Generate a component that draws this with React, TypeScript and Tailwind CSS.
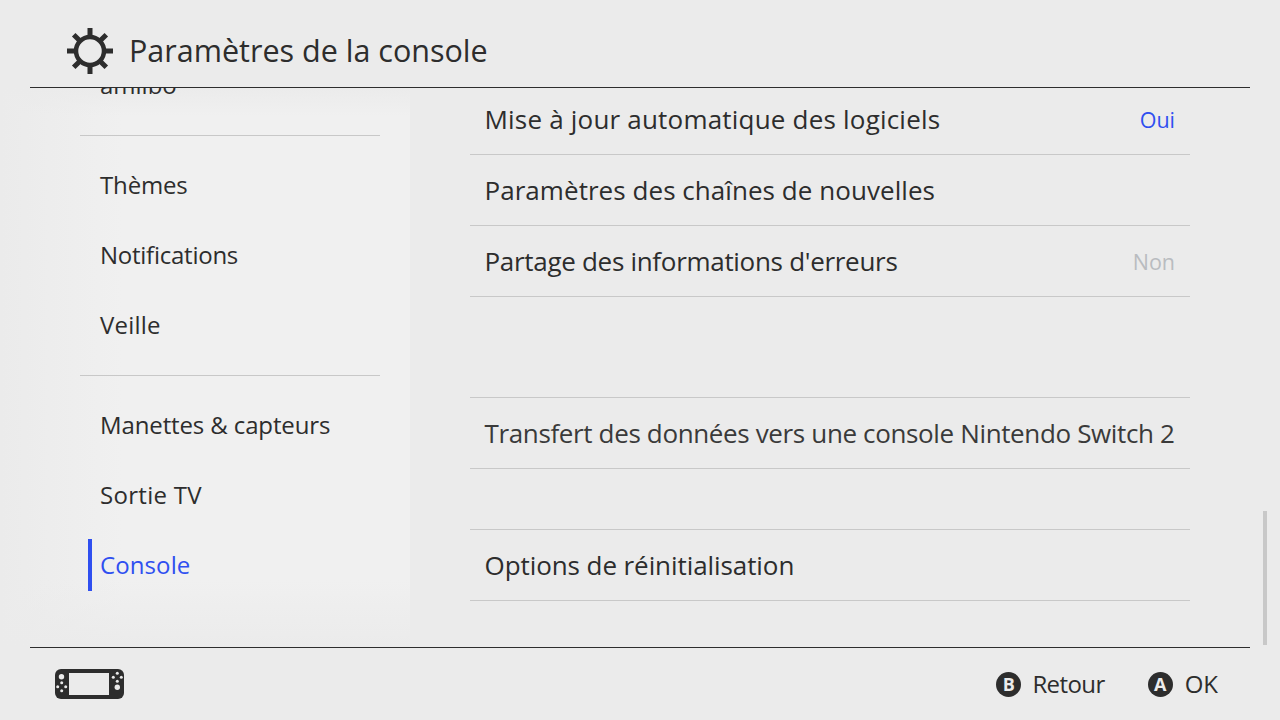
import React from 'react';

const font = { fontFamily: '"Open Sans", sans-serif' };

function SideItem({ label, labelClass, active }: { label: string; labelClass?: string; active?: boolean }) {
  return (
    <div className="relative h-[70px] flex items-center pl-[20px]">
      {active && <div className="absolute left-[8px] top-[9px] w-[4px] h-[52px] bg-[#2f4ff0]" />}
      <span className={`text-[24px] ${active ? 'text-[#2f4ff0]' : 'text-[#2d2d2d]'} ${labelClass ?? ''}`}>{label}</span>
    </div>
  );
}

function Row({ label, labelClass, value, valueClass, top }: { label: string; labelClass?: string; value?: string; valueClass?: string; top?: boolean }) {
  return (
    <div className={`flex items-center justify-between pl-[14.5px] pr-[15px] pt-[1px] border-b border-[#c8c8c8] ${top ? 'border-t h-[72px]' : 'h-[71px]'}`}>
      <span className={`text-[26px] whitespace-nowrap ${labelClass ?? 'text-[#2d2d2d]'}`}>{label}</span>
      {value && <span className={`text-[21.5px] pt-[2px] ${valueClass}`}>{value}</span>}
    </div>
  );
}

function Gear() {
  return (
    <svg width="48" height="48" viewBox="0 0 48 48" fill="none" stroke="#2d2d2d">
      <circle cx="24" cy="24" r="14" strokeWidth="4.5" />
      <path strokeWidth="5" d="M24 1v9M24 38v9M1 24h9M38 24h9M7.7 7.7l6.4 6.4M33.9 33.9l6.4 6.4M40.3 7.7l-6.4 6.4M14.1 33.9l-6.4 6.4" />
    </svg>
  );
}

function ConsoleIcon() {
  return (
    <svg width="69" height="30" viewBox="0 0 69 30">
      <rect width="69" height="30" rx="6" fill="#2d2d2d" />
      <g fill="#ebebeb">
        <rect x="14" y="4" width="40" height="22" />
        <circle cx="6.5" cy="7.7" r="2.7" />
        <circle cx="62.3" cy="18.3" r="2.7" />
        <circle cx="6.7" cy="13.7" r="1.5" /><circle cx="6.7" cy="21.7" r="1.5" /><circle cx="2.7" cy="17.7" r="1.5" /><circle cx="10.7" cy="17.7" r="1.5" />
        <circle cx="62.3" cy="4.3" r="1.5" /><circle cx="62.3" cy="12.3" r="1.5" /><circle cx="58.3" cy="8.3" r="1.5" /><circle cx="66.3" cy="8.3" r="1.5" />
      </g>
    </svg>
  );
}

function PadButton({ letter }: { letter: string }) {
  return (
    <span className="w-[25px] h-[25px] rounded-full bg-[#2d2d2d] text-[#ebebeb] flex items-center justify-center text-[18px] font-bold">
      {letter}
    </span>
  );
}

export default function App() {
  return (
    <div className="w-[1280px] h-[720px] relative overflow-hidden bg-[#ebebeb] flex flex-col" style={font}>
      <div className="mx-[30px] h-[88px] shrink-0 border-b border-[#2d2d2d] flex items-center pl-[36px] gap-[15px] pt-[14px]">
        <Gear />
        <h1 className="text-[30.5px] text-[#2d2d2d] font-normal">Paramètres de la console</h1>
      </div>

      <div className="h-[559px] shrink-0 overflow-hidden flex">
        <div className="w-[410px] shrink-0 pl-[80px] pr-[30px] bg-[linear-gradient(to_bottom,#ebebeb,transparent_5%,transparent_88%,#ebebeb),linear-gradient(to_right,#ebebeb,#f0f0f0_30%)]">
          <div className="h-[48px] border-b border-[#c8c8c8] relative">
            <span className="absolute left-[20px] -top-[21px] text-[24px] text-[#2d2d2d]">amiibo</span>
          </div>
          <div className="h-[240px] border-b border-[#c8c8c8] flex flex-col pt-[14px]">
            <SideItem label="Thèmes" labelClass="-tracking-[0.15px]" />
            <SideItem label="Notifications" labelClass="-tracking-[0.25px]" />
            <SideItem label="Veille" labelClass="tracking-[0.2px]" />
          </div>
          <div className="pt-[14px]">
            <SideItem label="Manettes & capteurs" labelClass="-tracking-[0.12px]" />
            <SideItem label="Sortie TV" labelClass="tracking-[0.3px]" />
            <SideItem label="Console" active labelClass="tracking-[0.1px]" />
          </div>
        </div>

        <div className="ml-[60px] w-[720px] shrink-0 -mt-[4px]">
          <Row label="Mise à jour automatique des logiciels" labelClass="text-[#2d2d2d] tracking-[0.2px]" value="Oui" valueClass="text-[#2f4ff0]" />
          <Row label="Paramètres des chaînes de nouvelles" labelClass="text-[#2d2d2d] tracking-[0.05px]" />
          <Row label="Partage des informations d'erreurs" labelClass="text-[#2d2d2d] -tracking-[0.3px]" value="Non" valueClass="text-[#b9bcc0]" />
          <div className="h-[100px]" />
          <Row label="Transfert des données vers une console Nintendo Switch 2" labelClass="text-[#3a3a3a] -tracking-[0.36px]" top />
          <div className="h-[60px]" />
          <Row label="Options de réinitialisation" labelClass="text-[#2d2d2d] -tracking-[0.08px]" top />
        </div>
      </div>

      <div className="mx-[30px] flex-1 border-t border-[#2d2d2d] flex items-center justify-between pl-[25px] pr-[32px]">
        <ConsoleIcon />
        <div className="flex items-center gap-[43px] text-[24px] text-[#2d2d2d]">
          <div className="flex items-center gap-[11px]"><PadButton letter="B" /><span className="-tracking-[0.6px]">Retour</span></div>
          <div className="flex items-center gap-[12px]"><PadButton letter="A" /><span>OK</span></div>
        </div>
      </div>

      <div className="absolute left-[1263px] top-[511px] w-[4px] h-[134px] bg-[#c8c8c8]" />
    </div>
  );
}
